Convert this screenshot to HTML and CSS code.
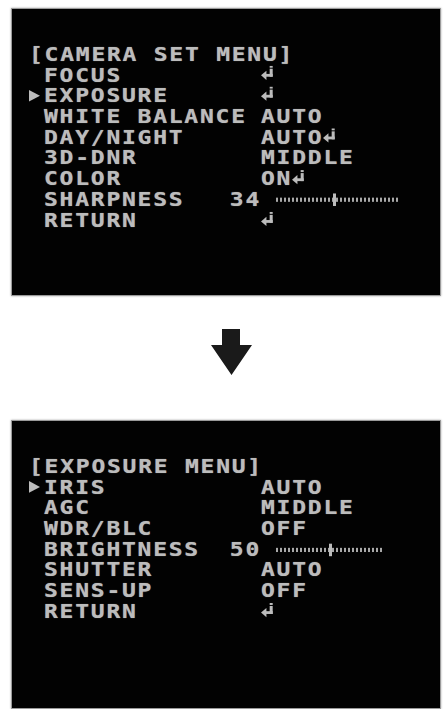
FILE: index.html
```html
<!DOCTYPE html>
<html lang="en">
<head>
    <meta charset="UTF-8">
    <title>Camera OSD Menu</title>
    <link rel="stylesheet" href="styles.css">
</head>
<body>
<div class="screen">
    <div class="osd">
        <div class="osd-title">[CAMERA SET MENU]</div>
        <ul class="osd-list">
            <li class="row"><span class="mark"></span><span class="label">FOCUS</span><span class="value"><svg class="enter" viewBox="0 0 12 15" preserveAspectRatio="none"><rect x="8" y="0" width="2.8" height="2"/><rect x="8" y="3" width="2.8" height="8"/><rect x="4" y="8.2" width="6.8" height="2.8"/><polygon points="0,9.6 5,5 5,14.2"/></svg></span></li>
            <li class="row"><span class="mark active"></span><span class="label">EXPOSURE</span><span class="value"><svg class="enter" viewBox="0 0 12 15" preserveAspectRatio="none"><rect x="8" y="0" width="2.8" height="2"/><rect x="8" y="3" width="2.8" height="8"/><rect x="4" y="8.2" width="6.8" height="2.8"/><polygon points="0,9.6 5,5 5,14.2"/></svg></span></li>
            <li class="row"><span class="mark"></span><span class="label">WHITE BALANCE</span><span class="value">AUTO</span></li>
            <li class="row"><span class="mark"></span><span class="label">DAY/NIGHT</span><span class="value">AUTO<svg class="enter" viewBox="0 0 12 15" preserveAspectRatio="none"><rect x="8" y="0" width="2.8" height="2"/><rect x="8" y="3" width="2.8" height="8"/><rect x="4" y="8.2" width="6.8" height="2.8"/><polygon points="0,9.6 5,5 5,14.2"/></svg></span></li>
            <li class="row"><span class="mark"></span><span class="label">3D-DNR</span><span class="value">MIDDLE</span></li>
            <li class="row"><span class="mark"></span><span class="label">COLOR</span><span class="value">ON<svg class="enter" viewBox="0 0 12 15" preserveAspectRatio="none"><rect x="8" y="0" width="2.8" height="2"/><rect x="8" y="3" width="2.8" height="8"/><rect x="4" y="8.2" width="6.8" height="2.8"/><polygon points="0,9.6 5,5 5,14.2"/></svg></span></li>
            <li class="row"><span class="mark"></span><span class="label">SHARPNESS<span class="num">34</span></span><span class="value"><span class="slider long"><span class="knob" style="left: 57px"></span></span></span></li>
            <li class="row"><span class="mark"></span><span class="label">RETURN</span><span class="value"><svg class="enter" viewBox="0 0 12 15" preserveAspectRatio="none"><rect x="8" y="0" width="2.8" height="2"/><rect x="8" y="3" width="2.8" height="8"/><rect x="4" y="8.2" width="6.8" height="2.8"/><polygon points="0,9.6 5,5 5,14.2"/></svg></span></li>
        </ul>
    </div>
</div>

<div class="step">
    <svg class="down-arrow" viewBox="0 0 42 47"><polygon points="11,0 29,0 29,16 41,16 20.5,46 0,16 11,16"/></svg>
</div>

<div class="screen">
    <div class="osd">
        <div class="osd-title">[EXPOSURE MENU]</div>
        <ul class="osd-list">
            <li class="row"><span class="mark active"></span><span class="label">IRIS</span><span class="value">AUTO</span></li>
            <li class="row"><span class="mark"></span><span class="label">AGC</span><span class="value">MIDDLE</span></li>
            <li class="row"><span class="mark"></span><span class="label">WDR/BLC</span><span class="value">OFF</span></li>
            <li class="row"><span class="mark"></span><span class="label">BRIGHTNESS<span class="num">50</span></span><span class="value"><span class="slider short"><span class="knob" style="left: 53px"></span></span></span></li>
            <li class="row"><span class="mark"></span><span class="label">SHUTTER</span><span class="value">AUTO</span></li>
            <li class="row"><span class="mark"></span><span class="label">SENS-UP</span><span class="value">OFF</span></li>
            <li class="row"><span class="mark"></span><span class="label">RETURN</span><span class="value"><svg class="enter" viewBox="0 0 12 15" preserveAspectRatio="none"><rect x="8" y="0" width="2.8" height="2"/><rect x="8" y="3" width="2.8" height="8"/><rect x="4" y="8.2" width="6.8" height="2.8"/><polygon points="0,9.6 5,5 5,14.2"/></svg></span></li>
        </ul>
    </div>
</div>
</body>
</html>
```

FILE: styles.css
```css
body {
    margin: 0;
    padding: 8px 5px 0 11px;
    background-color: #fff;
    font-family: "DejaVu Sans Mono", "Liberation Mono", monospace;
}
.screen {
    box-sizing: border-box;
    width: 430px;
    height: 288px;
    background-color: #020202;
    border: 1px solid #9a9a9a;
    box-shadow: 0 0 2px rgba(0, 0, 0, 0.35);
    padding: 35px 0 0 17px;
    color: #bcbcbc;
}
.screen + .step + .screen {
    height: 289px;
}
/* OSD font is wide and short: draw it larger and squash it vertically */
.osd {
    font-size: 23px;
    font-weight: bold;
    letter-spacing: 1.75px;
    transform: scaleY(0.835);
    transform-origin: 0 0;
    text-shadow: 0 0 1px rgba(200, 200, 200, 0.7);
}
.osd-title {
    height: 24.9px;
    line-height: 24.9px;
    white-space: pre;
}
.osd-list {
    list-style: none;
    margin: 0;
    padding: 0;
}
.row {
    display: grid;
    grid-template-columns: 15px 217px 1fr;
    height: 24.9px;
    line-height: 24.9px;
    align-items: center;
}
.mark.active {
    width: 0;
    height: 0;
    border-top: 7px solid transparent;
    border-bottom: 7px solid transparent;
    border-left: 11px solid #bcbcbc;
}
.label {
    display: flex;
    justify-content: space-between;
    white-space: pre;
}
.value {
    display: flex;
    align-items: center;
    white-space: pre;
}
.enter {
    width: 13px;
    height: 18px;
    fill: #bcbcbc;
    margin-top: -4px;
}
.slider {
    position: relative;
    display: block;
    height: 5px;
    margin-left: 15px;
    background: repeating-linear-gradient(90deg, #a8a8a8 0, #a8a8a8 2px, transparent 2px, transparent 4px);
}
.slider.long {
    width: 122px;
}
.slider.short {
    width: 106px;
}
.knob {
    position: absolute;
    top: -5px;
    width: 3px;
    height: 15px;
    background-color: #bcbcbc;
}
.step {
    display: flex;
    justify-content: center;
    padding: 33px 0 44px 11px;
}
.down-arrow {
    width: 42px;
    height: 47px;
    fill: #1a1a1a;
}
```
